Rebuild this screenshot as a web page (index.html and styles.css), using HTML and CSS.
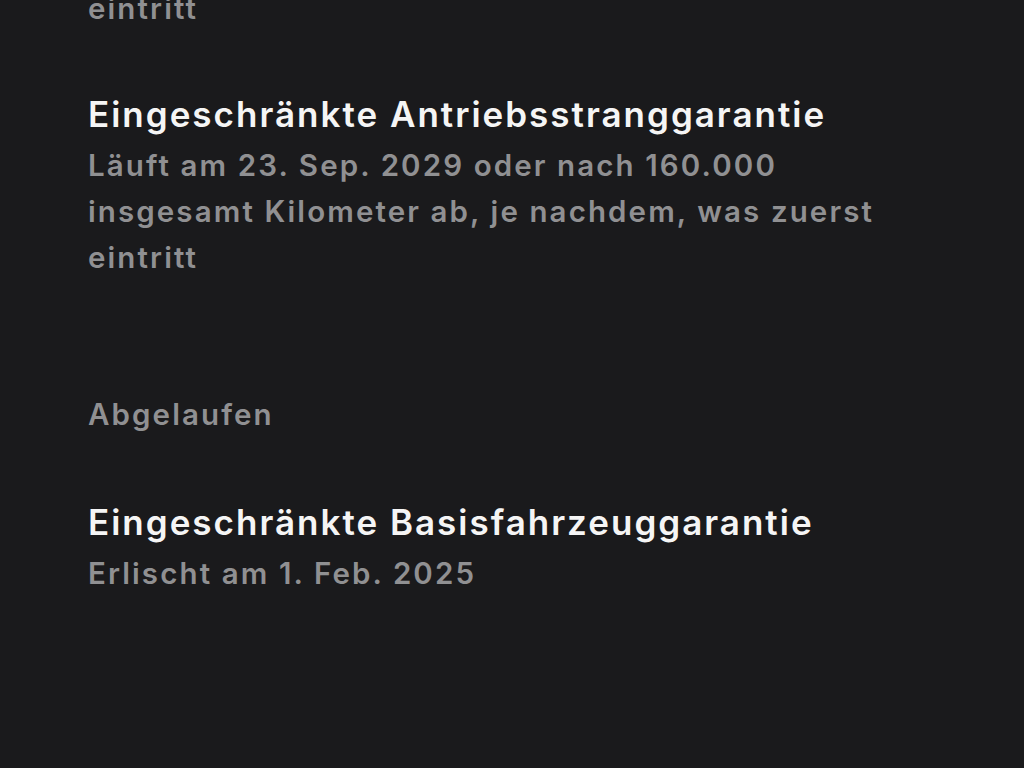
FILE: index.html
```html
<!DOCTYPE html>
<html lang="de">
<head>
<meta charset="utf-8">
<link rel="stylesheet" href="styles.css">
</head>
<body>
<main class="list">
  <section class="item item-prev">
    <p class="desc">eintritt</p>
  </section>
  <section class="item">
    <h2 class="title">Eingeschränkte Antriebsstranggarantie</h2>
    <p class="desc">Läuft am 23. Sep. 2029 oder nach 160.000<br>insgesamt Kilometer ab, je nachdem, was zuerst<br>eintritt</p>
  </section>
  <h3 class="group">Abgelaufen</h3>
  <section class="item">
    <h2 class="title">Eingeschränkte Basisfahrzeuggarantie</h2>
    <p class="desc">Erlischt am 1. Feb. 2025</p>
  </section>
</main>
</body>
</html>
```
FILE: styles.css
```css
html, body {
  margin: 0;
  padding: 0;
  background: #1a1a1c;
  height: 100%;
  overflow: hidden;
}
body {
  font-family: Inter, "Noto Sans", sans-serif;
  -webkit-font-smoothing: antialiased;
}
.list {
  display: flex;
  flex-direction: column;
  padding: 0 0 0 88px;
  margin-top: -15px;
}
.item {
  display: flex;
  flex-direction: column;
  gap: 5px;
}
.item-prev {
  margin-bottom: 60px;
}
.title {
  margin: 0;
  font-size: 35px;
  line-height: 46px;
  font-weight: 600;
  color: #f5f5f5;
  letter-spacing: 2px;
  white-space: nowrap;
}
.desc {
  margin: 0;
  font-size: 29.5px;
  line-height: 46px;
  font-weight: 600;
  color: #909092;
  letter-spacing: 2.1px;
  white-space: nowrap;
}
.group {
  margin: 111px 0 62px;
  font-size: 29.5px;
  line-height: 46px;
  font-weight: 600;
  color: #909092;
  letter-spacing: 2.1px;
}
```
